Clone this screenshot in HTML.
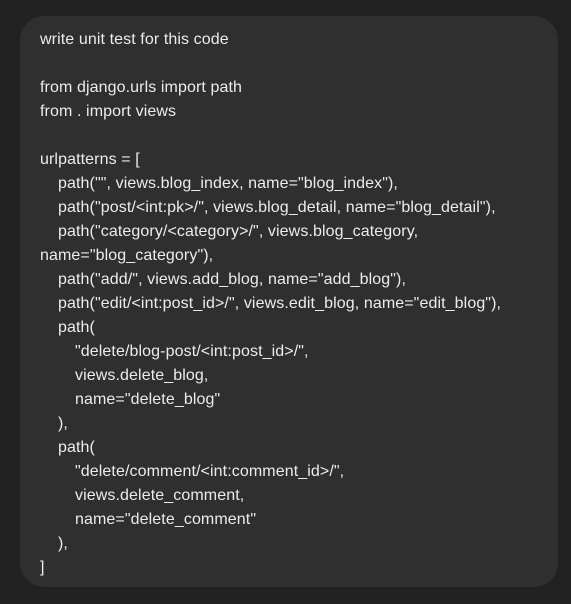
<!DOCTYPE html>
<html><head><meta charset="utf-8"><style>
html,body{margin:0;padding:0;background:#212121;width:571px;height:604px;overflow:hidden}
.b{position:absolute;left:20px;top:16px;width:538px;height:571px;background:#2f2f2f;border-radius:24px}
.t{position:absolute;left:40px;top:28px;font-family:"Liberation Sans",sans-serif;font-size:16px;line-height:24px;color:#ececec;letter-spacing:0.1px}
.t div{white-space:pre;height:24px}
.i1{padding-left:18px}.i2{padding-left:35px}
</style></head><body>
<div class="b"></div>
<div class="t"><div>write unit test for this code</div><div></div><div>from django.urls import path</div><div>from . import views</div><div></div><div>urlpatterns = [</div><div class="i1">path("", views.blog_index, name="blog_index"),</div><div class="i1">path("post/&lt;int:pk&gt;/", views.blog_detail, name="blog_detail"),</div><div class="i1">path("category/&lt;category&gt;/", views.blog_category,</div><div>name="blog_category"),</div><div class="i1">path("add/", views.add_blog, name="add_blog"),</div><div class="i1">path("edit/&lt;int:post_id&gt;/", views.edit_blog, name="edit_blog"),</div><div class="i1">path(</div><div class="i2">"delete/blog-post/&lt;int:post_id&gt;/",</div><div class="i2">views.delete_blog,</div><div class="i2">name="delete_blog"</div><div class="i1">),</div><div class="i1">path(</div><div class="i2">"delete/comment/&lt;int:comment_id&gt;/",</div><div class="i2">views.delete_comment,</div><div class="i2">name="delete_comment"</div><div class="i1">),</div><div>]</div></div>
</body></html>
